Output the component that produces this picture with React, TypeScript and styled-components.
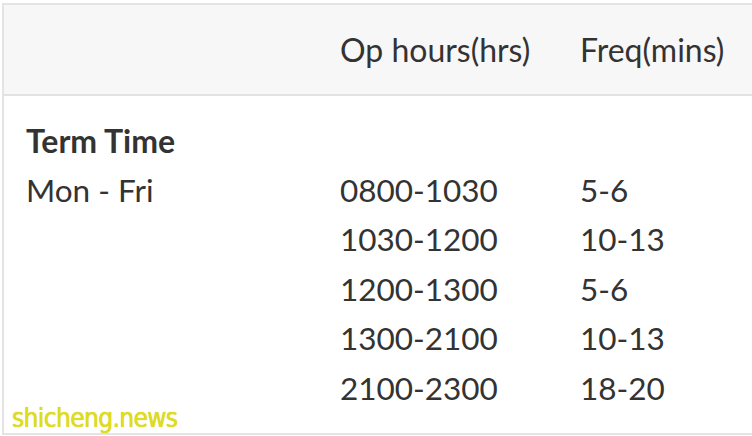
import React from "react";
import styled, { createGlobalStyle } from "styled-components";

const Global = createGlobalStyle`
  html, body { margin: 0; padding: 0; background: #ffffff; }
  body { font-family: Lato, "Noto Sans", sans-serif; color: #333333; overflow: hidden; }
`;

const Page = styled.div`
  position: relative;
  width: 752px;
  height: 436px;
  padding: 3px 0 0 2px;
  box-sizing: border-box;
`;

const Table = styled.div`
  height: 432px;
  box-sizing: border-box;
  border-top: 2px solid #e4e4e4;
  border-left: 2px solid #e4e4e4;
  border-bottom: 2px solid #e4e4e4;
  display: flex;
  flex-direction: column;
  overflow: hidden;
`;

const Row = styled.div<{ $head?: boolean }>`
  display: grid;
  grid-template-columns: 314px 240px 1fr;
  align-items: center;
  padding-left: 22px;
  height: ${(p) => (p.$head ? "89px" : "49.6px")};
  background: ${(p) => (p.$head ? "#f7f7f7" : "transparent")};
  border-bottom: ${(p) => (p.$head ? "2px solid #e2e2e2" : "none")};
  font-size: ${(p) => (p.$head ? "32px" : "31.5px")};
  line-height: 1;
`;

const Body = styled.div`
  padding-top: 20px;
`;

const Cell = styled.div<{ $bold?: boolean }>`
  font-weight: ${(p) => (p.$bold ? 700 : 400)};
  font-size: ${(p) => (p.$bold ? "32px" : "inherit")};
  white-space: nowrap;
  color: #333333;
`;

const Mark = styled.div`
  position: absolute;
  left: 12px;
  top: 403px;
  font-family: "DejaVu Sans Condensed", "DejaVu Sans", sans-serif;
  font-stretch: condensed;
  font-size: 26px;
  color: #e0dd1c;
  letter-spacing: -0.6px;
  text-shadow: 0 0 1px #c2be00;
`;

const rows: [string, string, string][] = [
  ["Mon - Fri", "0800-1030", "5-6"],
  ["", "1030-1200", "10-13"],
  ["", "1200-1300", "5-6"],
  ["", "1300-2100", "10-13"],
  ["", "2100-2300", "18-20"],
];

export default function App() {
  return (
    <Page>
      <Global />
      <Table>
        <Row $head>
          <Cell />
          <Cell>Op hours(hrs)</Cell>
          <Cell>Freq(mins)</Cell>
        </Row>
        <Body>
          <Row>
            <Cell $bold>Term Time</Cell>
            <Cell />
            <Cell />
          </Row>
          {rows.map((r, i) => (
            <Row key={i}>
              <Cell>{r[0]}</Cell>
              <Cell>{r[1]}</Cell>
              <Cell>{r[2]}</Cell>
            </Row>
          ))}
        </Body>
      </Table>
      <Mark>shicheng.news</Mark>
    </Page>
  );
}
